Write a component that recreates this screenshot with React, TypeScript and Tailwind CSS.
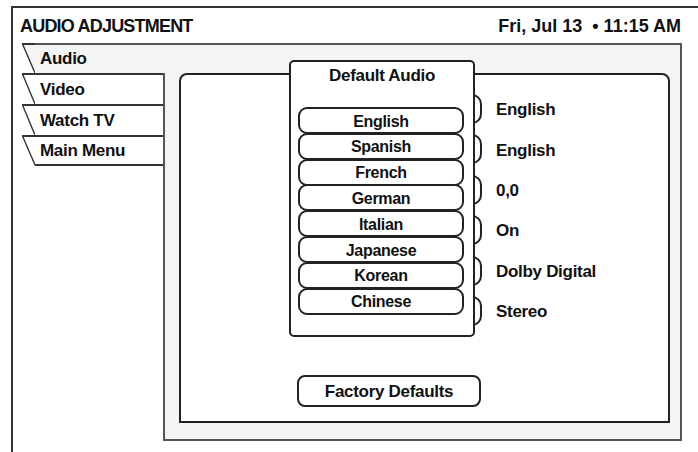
const tabs = ["Video", "Watch TV", "Main Menu"];

const languages = ["English", "Spanish", "French", "German", "Italian", "Japanese", "Korean", "Chinese"];

const settings = ["English", "English", "0,0", "On", "Dolby Digital", "Stereo"];

const Slant = ({ fill, h, last }: { fill: string; h: number; last?: boolean }) => (
  <svg width="13" height={h} viewBox={`0 0 13 ${h}`} className="shrink-0 block">
    <polygon points={`0,1 13,1 13,${h}`} fill={fill} />
    <line x1="0" y1="1" x2="13" y2="1" stroke="#333" strokeWidth="2" />
    <line x1="0.5" y1="1" x2="13" y2={last ? h - 1 : h} stroke="#333" strokeWidth="1.4" />
  </svg>
);

const App = () => {
  return (
    <div className="w-[698px] h-[452px] overflow-hidden bg-white pl-[11px] pt-[6px] text-[#111] font-bold font-['Liberation_Sans',Arial,sans-serif]">
      <div className="h-full border-l-2 border-t-2 border-[#333] flex flex-col">
        <div className="h-[35px] shrink-0 flex justify-between pl-[7px] pr-[17px] pt-[8px] text-[18px] leading-[20px]">
          <span className="tracking-[-0.8px]">AUDIO ADJUSTMENT</span>
          <span className="whitespace-pre">Fri, Jul 13  • 11:15 AM</span>
        </div>

        <div className="ml-[9px] mr-[16px] flex flex-col text-[17px] tracking-[-0.3px]">
          {/* active tab */}
          <div className="flex h-[30px]">
            <Slant fill="#f4f4f4" h={30} />
            <div className="flex-1 bg-[#f4f4f4] border-t-2 border-r-2 border-[#555] flex items-center pl-[5px]">
              Audio
            </div>
          </div>

          <div className="flex">
            <div className="w-[141px] shrink-0 flex flex-col">
              {tabs.map((t, i) => (
                <div key={t} className="flex h-[31px]">
                  <Slant fill="#ffffff" h={31} last={i === tabs.length - 1} />
                  <div
                    className={`flex-1 border-t-2 border-[#333] flex items-center pl-[5px] ${
                      i === tabs.length - 1 ? "border-b-2" : ""
                    }`}
                  >
                    {t}
                  </div>
                </div>
              ))}
            </div>

            <div className="flex-1 h-[368px] bg-[#f4f4f4] border-l-2 border-r-2 border-b-2 border-[#555] pl-[14px] pr-[10px] pb-[16px]">
              <div className="relative h-full bg-white border-2 border-[#222] rounded-t-[8px] flex flex-col pt-[19px]">
                <div className="flex flex-col gap-[10.4px]">
                  {settings.map((v, i) => (
                    <div key={i} className="flex items-center h-[30px]">
                      <div className="ml-[119px] w-[182px] h-full border-2 border-[#222] rounded-[10px]" />
                      <span className="ml-[14px] pt-[2px]">{v}</span>
                    </div>
                  ))}
                </div>

                <button className="ml-[116px] mt-[49px] w-[184px] h-[32px] border-2 border-[#222] rounded-[8px] bg-white flex items-center justify-center pt-[1px]">
                  Factory Defaults
                </button>

                <div className="absolute left-[108px] top-[-15px] w-[186px] h-[277px] z-10 bg-white border-2 border-[#222] rounded-[5px] flex flex-col">
                  <div className="text-center pt-[4px] leading-[20px]">Default Audio</div>
                  <div className="mt-[21px] ml-[7px] w-[166px] flex flex-col">
                    {languages.map((l, i) => (
                      <div
                        key={l}
                        className={`h-[27px] border-2 border-[#222] rounded-[9px] flex items-center justify-center pt-[2px] text-[16px] ${
                          i > 0 ? "-mt-[1.2px]" : ""
                        }`}
                      >
                        {l}
                      </div>
                    ))}
                  </div>
                </div>
              </div>
            </div>
          </div>
        </div>
      </div>
    </div>
  );
};

export default App;
